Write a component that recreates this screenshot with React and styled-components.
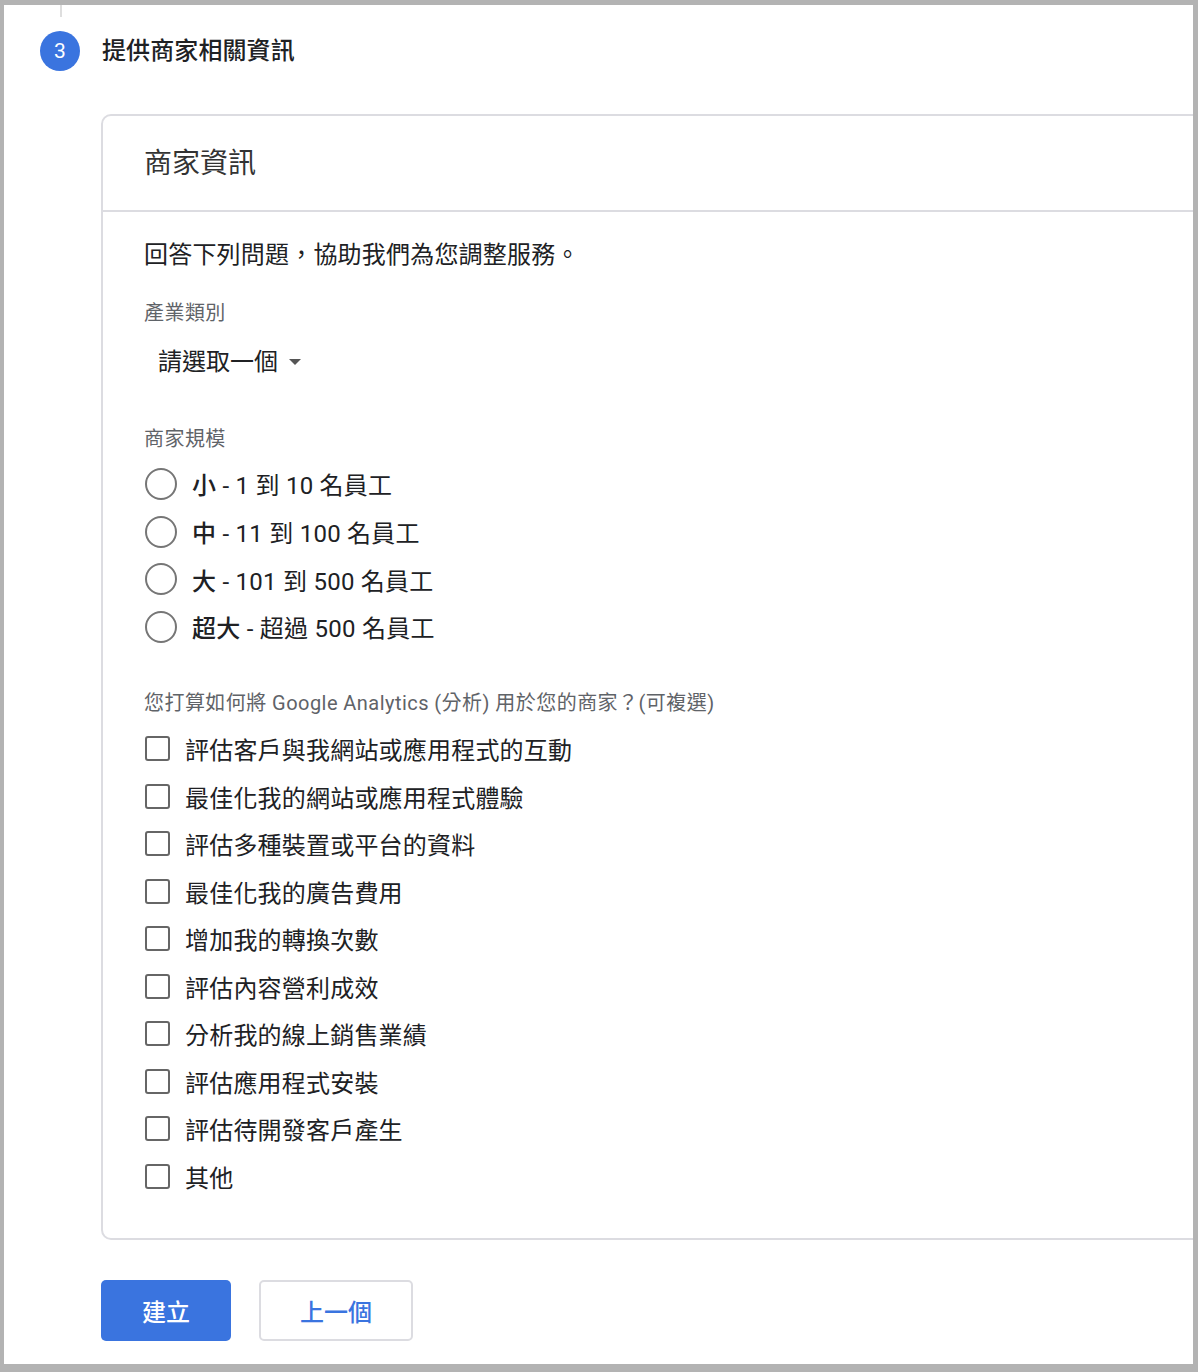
import styled, { createGlobalStyle } from "styled-components";

const sizes = [
  { name: "小", rest: " - 1 到 10 名員工" },
  { name: "中", rest: " - 11 到 100 名員工" },
  { name: "大", rest: " - 101 到 500 名員工" },
  { name: "超大", rest: " - 超過 500 名員工" },
];

const uses = [
  "評估客戶與我網站或應用程式的互動",
  "最佳化我的網站或應用程式體驗",
  "評估多種裝置或平台的資料",
  "最佳化我的廣告費用",
  "增加我的轉換次數",
  "評估內容營利成效",
  "分析我的線上銷售業績",
  "評估應用程式安裝",
  "評估待開發客戶產生",
  "其他",
];

const App = () => {
  return (
    <>
      <GlobalStyle />
      <Panel>
        <Connector />
        <StepHeader>
          <StepNumber>3</StepNumber>
          <StepTitle>提供商家相關資訊</StepTitle>
        </StepHeader>
        <Content>
          <Card>
            <CardHeader>商家資訊</CardHeader>
            <CardBody>
              <Intro>回答下列問題，協助我們為您調整服務。</Intro>

              <FieldLabel>產業類別</FieldLabel>
              <Select>
                請選取一個
                <Caret />
              </Select>

              <FieldLabel $top={47}>商家規模</FieldLabel>
              <OptionList $top={7}>
                {sizes.map((s) => (
                  <RadioRow key={s.name}>
                    <Radio />
                    <span>
                      <b>{s.name}</b>
                      {s.rest}
                    </span>
                  </RadioRow>
                ))}
              </OptionList>

              <FieldLabel $top={38}>
                您打算如何將 Google Analytics (分析) 用於您的商家？(可複選)
              </FieldLabel>
              <OptionList $top={8}>
                {uses.map((u) => (
                  <CheckRow key={u}>
                    <Checkbox />
                    <span>{u}</span>
                  </CheckRow>
                ))}
              </OptionList>
            </CardBody>
          </Card>
          <Actions>
            <PrimaryButton>建立</PrimaryButton>
            <OutlineButton>上一個</OutlineButton>
          </Actions>
        </Content>
      </Panel>
    </>
  );
};

export default App;

const GlobalStyle = createGlobalStyle`
  html, body {
    margin: 0;
    padding: 0;
    background: #b3b3b3;
  }
  body {
    padding: 5px 5px 8px 4px;
    font-family: Roboto, "Noto Sans CJK TC", "Noto Sans", sans-serif;
    color: #202124;
  }
`;

const Panel = styled.div`
  background: #fff;
  height: 1359px;
  overflow: hidden;
  box-sizing: border-box;
`;

const Connector = styled.div`
  margin-left: 56px;
  width: 2px;
  height: 12px;
  background: #dedede;
`;

const StepHeader = styled.div`
  display: flex;
  align-items: center;
  gap: 22px;
  margin-top: 14px;
  padding-left: 36px;
`;

const StepNumber = styled.div`
  width: 40px;
  height: 40px;
  border-radius: 50%;
  background: #3a74df;
  color: #fff;
  display: flex;
  align-items: center;
  justify-content: center;
  font-size: 21px;
`;

const StepTitle = styled.div`
  font-size: 24px;
  font-weight: 500;
  color: #202124;
  line-height: 32px;
  letter-spacing: 0.1px;
`;

const Content = styled.div`
  margin-left: 97px;
  margin-top: 43px;
`;

const Card = styled.div`
  border: 2px solid #dcdce1;
  border-radius: 10px;
  margin-right: -30px;
`;

const CardHeader = styled.div`
  height: 96px;
  box-sizing: border-box;
  display: flex;
  align-items: center;
  padding: 0 0 5px 41px;
  font-size: 28px;
  color: #333;
  border-bottom: 2px solid #dcdce1;
`;

const CardBody = styled.div`
  padding: 27px 41px 38px;
`;

const Intro = styled.div`
  font-size: 24px;
  line-height: 32px;
  letter-spacing: 0.2px;
  color: #202124;
`;

const FieldLabel = styled.div`
  margin-top: ${(p) => p.$top || 28}px;
  font-size: 20px;
  line-height: 28px;
  letter-spacing: 0.45px;
  color: #5f6368;
`;

const Select = styled.div`
  margin-top: 19px;
  padding-left: 14px;
  display: flex;
  align-items: center;
  font-size: 24px;
  line-height: 32px;
  color: #202124;
`;

const Caret = styled.span`
  margin-left: 11px;
  width: 0;
  height: 0;
  border-left: 6px solid transparent;
  border-right: 6px solid transparent;
  border-top: 6px solid #555;
`;

const OptionList = styled.div`
  margin-top: ${(p) => p.$top}px;
  display: flex;
  flex-direction: column;
`;

const RadioRow = styled.label`
  display: flex;
  align-items: center;
  gap: 15px;
  height: 47.7px;
  font-size: 24px;
  letter-spacing: 0.25px;
  color: #202124;
  b {
    font-weight: 500;
  }
`;

const Radio = styled.span`
  width: 28px;
  height: 28px;
  border: 2.5px solid #767676;
  border-radius: 50%;
  margin-left: 1px;
`;

const CheckRow = styled.label`
  display: flex;
  align-items: center;
  gap: 15px;
  height: 47.55px;
  font-size: 24px;
  letter-spacing: 0.2px;
  color: #202124;
`;

const Checkbox = styled.span`
  width: 21px;
  height: 21px;
  border: 2px solid #666;
  border-radius: 3px;
  margin-left: 1px;
`;

const Actions = styled.div`
  display: flex;
  gap: 28px;
  margin-top: 40px;
`;

const PrimaryButton = styled.button`
  width: 130px;
  height: 61px;
  border: none;
  border-radius: 5px;
  background: #3a74df;
  color: #fff;
  font-family: inherit;
  font-size: 24px;
  font-weight: 500;
`;

const OutlineButton = styled.button`
  width: 154px;
  height: 61px;
  border: 2px solid #dcdce1;
  border-radius: 5px;
  background: #fff;
  color: #3a74df;
  font-family: inherit;
  font-size: 24px;
  font-weight: 500;
`;
